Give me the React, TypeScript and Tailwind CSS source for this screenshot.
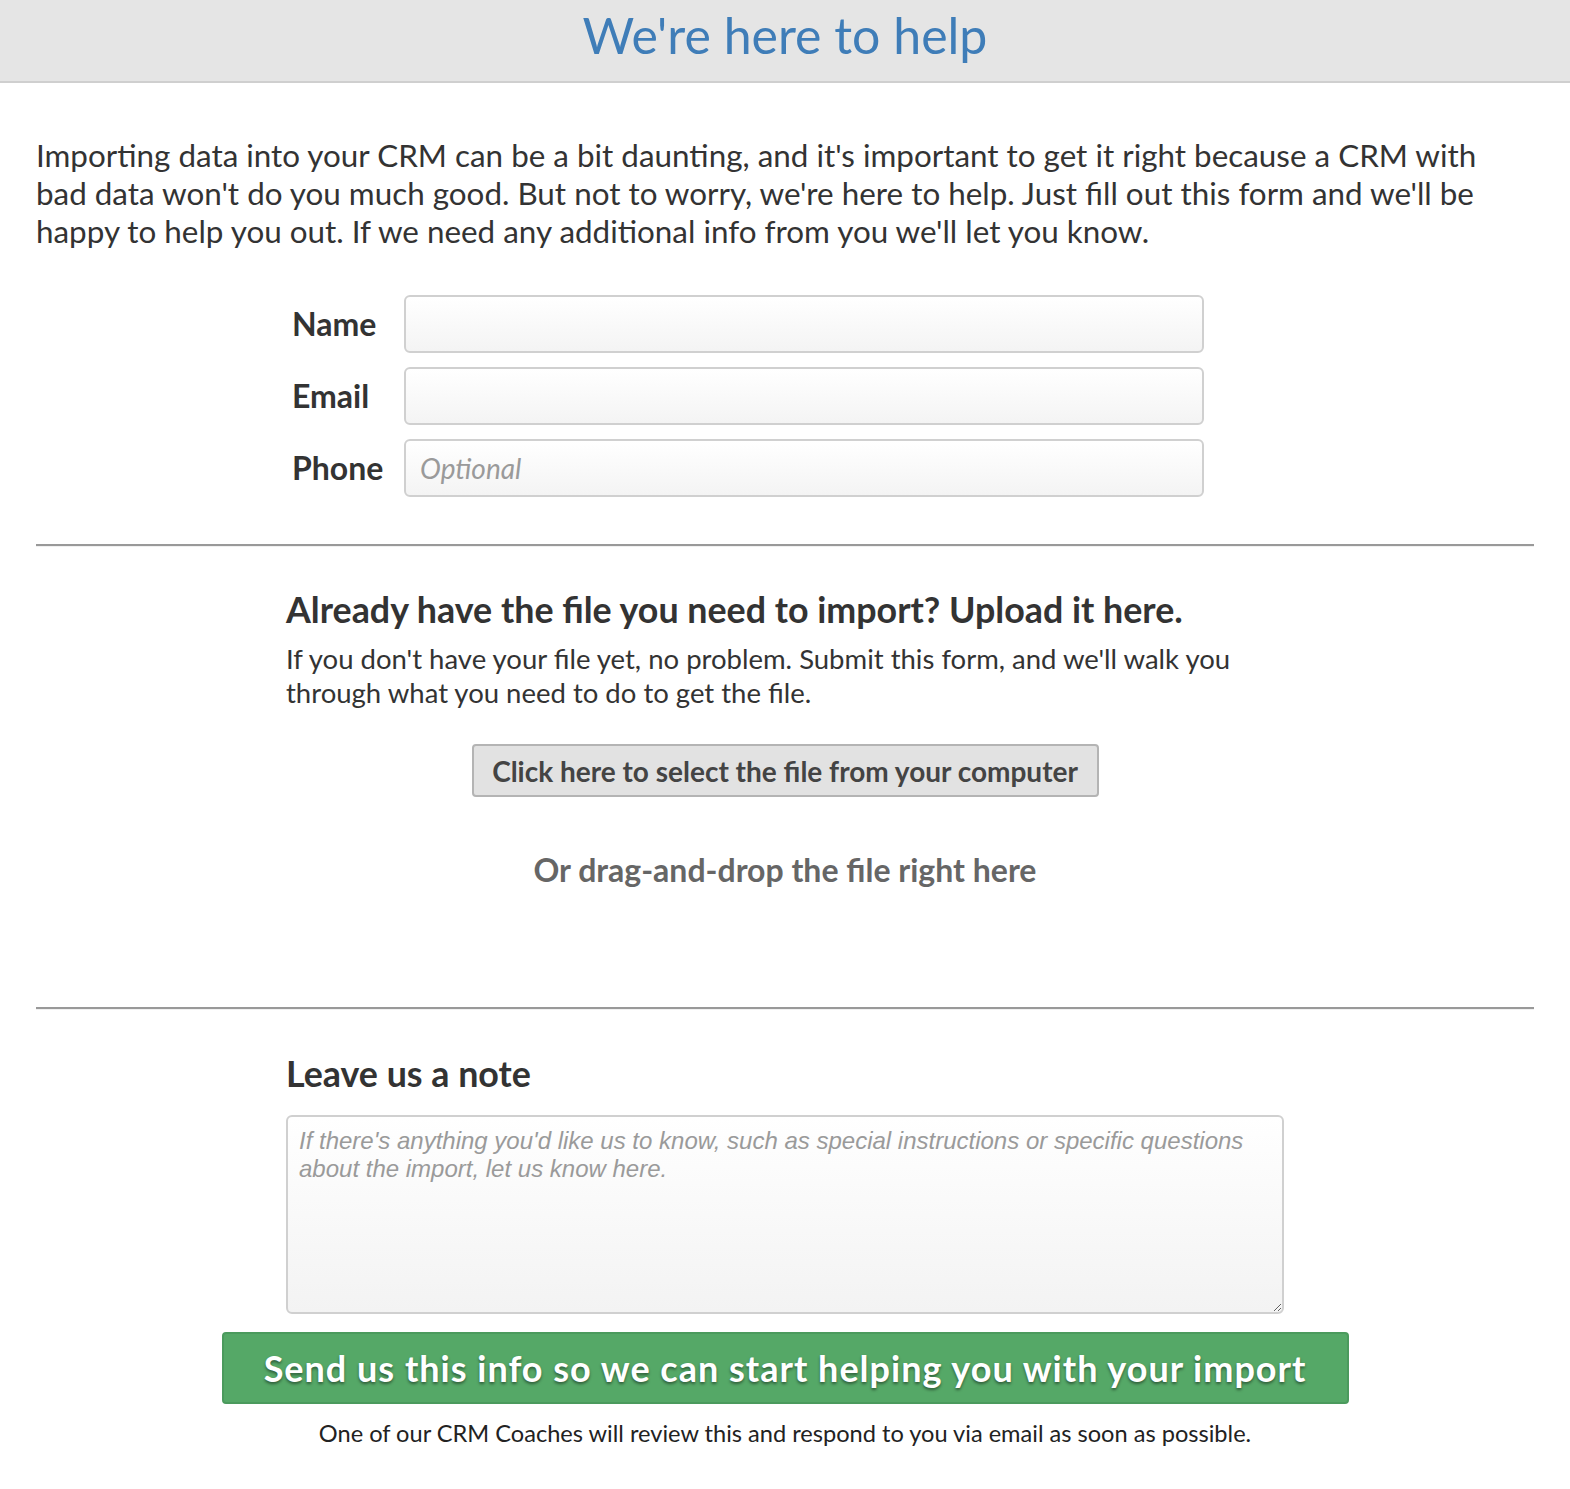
import React from "react";

const lato = { fontFamily: "Lato, 'Open Sans', sans-serif" };

function Field({ label, placeholder }: { label: string; placeholder?: string }) {
  return (
    <div className="flex items-center">
      <label className="w-[118px] pl-[6px] text-[32px] font-bold text-[#333]">{label}</label>
      <input
        placeholder={placeholder}
        className="h-[58px] w-[800px] rounded-[6px] border-2 border-[#d0d0d0] bg-gradient-to-b from-white to-[#f4f4f4] px-[14px] text-[28px] text-[#333] outline-none placeholder:italic placeholder:text-[#9a9a9a]"
      />
    </div>
  );
}

function Rule() {
  return <div className="mx-9 border-t-2 border-b border-t-[#999] border-b-[#f0f0f0]" />;
}

export default function App() {
  return (
    <div style={lato} className="min-h-[1489px] bg-white text-[#333]">
      <header className="flex h-[83px] items-center justify-center border-b-2 border-[#cfcfcf] bg-[#e5e5e5]">
        <h1 className="pb-[12px] text-[50px] leading-none text-[#3f7db8]">We're here to help</h1>
      </header>

      <p className="mx-9 mt-[53px] text-[31.4px] leading-[38px]">
        Importing data into your CRM can be a bit daunting, and it's important to get it right because a CRM with bad data
        won't do you much good. But not to worry, we're here to help. Just fill out this form and we'll be happy to help you
        out. If we need any additional info from you we'll let you know.
      </p>

      <div className="mx-auto mt-[45px] flex w-[998px] flex-col gap-[14px]">
        <Field label="Name" />
        <Field label="Email" />
        <Field label="Phone" placeholder="Optional" />
      </div>

      <div className="mt-[47px]">
        <Rule />
      </div>

      <section className="mx-auto mt-[41px] w-[998px]">
        <h2 className="text-[35.8px] font-bold leading-[44px]">Already have the file you need to import? Upload it here.</h2>
        <p className="mt-[10px] w-[960px] text-[27.5px] leading-[34px]">
          If you don't have your file yet, no problem. Submit this form, and we'll walk you through what you need to do to
          get the file.
        </p>
        <div className="mt-[34px] flex justify-center">
          <button className="h-[53px] w-[627px] rounded-[4px] border-2 border-[#b4b4b4] bg-[#e2e2e2] text-[28px] font-bold text-[#444]">
            Click here to select the file from your computer
          </button>
        </div>
        <p className="mt-[49px] text-center text-[32px] font-bold leading-[48px] text-[#666]">
          Or drag-and-drop the file right here
        </p>
      </section>

      <div className="mt-[113px]">
        <Rule />
      </div>

      <section className="mx-auto mt-[42px] w-[998px]">
        <h2 className="text-[35.8px] font-bold leading-[44px]">Leave us a note</h2>
        <textarea
          placeholder="If there's anything you'd like us to know, such as special instructions or specific questions about the import, let us know here."
          style={{ fontFamily: "'Liberation Sans', Arial, sans-serif" }}
          className="mt-[19px] block h-[199px] w-[998px] resize-y rounded-[6px] border-2 border-[#d0d0d0] bg-gradient-to-b from-white to-[#f3f3f3] px-[11px] py-[10px] text-[24px] leading-[28px] outline-none placeholder:italic placeholder:text-[#9a9a9a]"
        />
      </section>

      <div className="mt-[18px] flex justify-center">
        <button className="h-[72px] w-[1127px] rounded-[4px] border-2 border-[#4b9a5d] bg-[#55a867] text-[36px] font-bold tracking-[1px] text-white [text-shadow:0_2px_3px_rgba(0,0,0,0.45)]">
          Send us this info so we can start helping you with your import
        </button>
      </div>
      <p className="mt-[12px] text-center text-[23.6px] leading-[35px] text-[#222]">
        One of our CRM Coaches will review this and respond to you via email as soon as possible.
      </p>
    </div>
  );
}
